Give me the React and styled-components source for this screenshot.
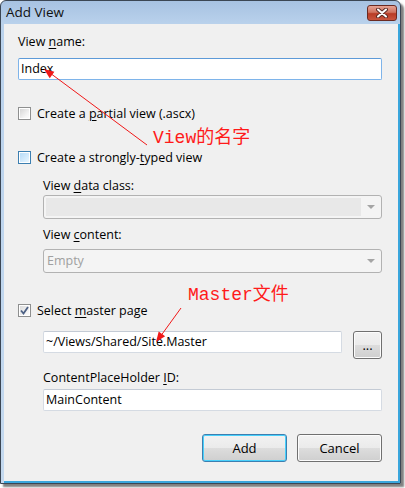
import styled, { createGlobalStyle } from "styled-components";

const GlobalStyle = createGlobalStyle`
  html, body {
    margin: 0;
    padding: 0;
    background: #ffffff;
  }
  body {
    font-family: "Open Sans", "Liberation Sans", Arial, sans-serif;
    font-size: 12.5px;
    color: #000;
  }
`;

const Page = styled.div`
  position: relative;
  width: 405px;
  height: 488px;
  overflow: hidden;
`;

const Window = styled.div`
  width: 401px;
  height: 484px;
  box-sizing: border-box;
  border: 1px solid #3b4654;
  border-radius: 6px 6px 0 0;
  background: linear-gradient(#a7c2e2, #bad2ec 24px, #c4d9ef);
  box-shadow: 3px 3px 2px rgba(0, 0, 0, 0.5);
  display: flex;
  flex-direction: column;
  padding: 0 0 0 3px;
`;

const TitleBar = styled.div`
  height: 23px;
  display: flex;
  justify-content: space-between;
  align-items: flex-start;
  padding: 0 3px 0 2px;
`;

const Title = styled.div`
  font-size: 13.5px;
  line-height: 14px;
  margin-top: 4px;
  color: #111;
`;

const CloseButton = styled.div`
  width: 30px;
  height: 16px;
  margin-top: 4px;
  box-sizing: border-box;
  border: 1px solid #6b2a22;
  border-radius: 3px;
  background: linear-gradient(#e6a395, #d0735f 45%, #b93b25 55%, #c9553e);
  display: flex;
  align-items: center;
  justify-content: center;
`;

const Client = styled.div`
  flex: 1;
  background: #f0f0f0;
  border-right: 2px solid #3aa6dc;
  border-bottom: 2px solid #3aa6dc;
  padding: 10px 16px 0 14px;
  display: flex;
  flex-direction: column;
`;

const Label = styled.div`
  line-height: 15px;
  margin-top: ${({ $top }) => $top || 0}px;
  color: #000;

  u {
    text-decoration: underline;
    text-underline-offset: 2px;
  }
`;

const TextBox = styled.div`
  height: 22px;
  box-sizing: border-box;
  margin-top: ${({ $top }) => $top || 0}px;
  border: 1px solid ${({ $focus }) => ($focus ? "#7eb4ea" : "#d5dbe3")};
  border-top-color: ${({ $focus }) => ($focus ? "#5d9ad8" : "#c4cbd5")};
  border-radius: 2px;
  background: #fff;
  padding: 0 2px;
  line-height: 20px;
  flex: ${({ $grow }) => ($grow ? 1 : "none")};
`;

const CheckRow = styled.div`
  display: flex;
  align-items: center;
  gap: 6px;
  height: 15px;
  margin-top: ${({ $top }) => $top || 0}px;

  u {
    text-underline-offset: 2px;
  }
`;

const boxStyles = {
  plain: { border: "#8e8f8f", bg: "linear-gradient(135deg, #d6d6d6, #f4f4f4 70%, #fbfbfb)" },
  hover: { border: "#3c7fb1", bg: "linear-gradient(135deg, #b8dcf8, #d9eefd 70%, #ebf6fe)" },
  checked: { border: "#8e8f8f", bg: "linear-gradient(135deg, #dcdcdc, #f4f4f4 70%, #fbfbfb)" },
};

const CheckBox = styled.span`
  width: 13px;
  height: 13px;
  box-sizing: border-box;
  border: 1px solid ${({ $kind }) => boxStyles[$kind].border};
  background: #fff;
  padding: 1px;
  display: inline-flex;

  &::before {
    content: "";
    flex: 1;
    background: ${({ $kind }) => boxStyles[$kind].bg};
  }
`;

const CheckWrap = styled.span`
  position: relative;
  display: inline-flex;

  svg {
    position: absolute;
    left: 2px;
    top: 2px;
  }
`;

const Indent = styled.div`
  margin-left: 25px;
  display: flex;
  flex-direction: column;
`;

const Combo = styled.div`
  height: 24px;
  box-sizing: border-box;
  margin-top: ${({ $top }) => $top || 0}px;
  border: 1px solid #b2b2b2;
  border-radius: 3px;
  background: #f4f4f4;
  display: flex;
  align-items: stretch;
  padding: 2px;
`;

const ComboField = styled.div`
  flex: 1;
  background: ${({ $shaded }) => ($shaded ? "#e8e8e8" : "transparent")};
  margin-right: 1px;
  color: #a0a0a0;
  line-height: 18px;
  padding-left: 1px;
`;

const ComboArrow = styled.div`
  width: 17px;
  display: flex;
  align-items: center;
  justify-content: center;

  &::after {
    content: "";
    border-left: 4px solid transparent;
    border-right: 4px solid transparent;
    border-top: 4px solid #a5a5a5;
  }
`;

const MasterRow = styled.div`
  display: flex;
  align-items: flex-start;
  gap: 11px;
  margin-top: 13px;
`;

const Button = styled.div`
  width: ${({ $w }) => $w || 85}px;
  height: 28px;
  box-sizing: border-box;
  border: 1px solid ${({ $default }) => ($default ? "#3c7fb1" : "#707070")};
  border-radius: 3px;
  box-shadow: inset 0 0 0 1px ${({ $default }) => ($default ? "#48d0fb" : "#fcfcfc")};
  background: linear-gradient(#f2f2f2, #ebebeb 50%, #dddddd 50%, #cfcfcf);
  display: flex;
  align-items: center;
  justify-content: center;
  font-size: 13px;
  color: #000;
`;

const ButtonBar = styled.div`
  display: flex;
  justify-content: flex-end;
  gap: 10px;
  margin-top: 23px;
`;

const Note = styled.div`
  position: absolute;
  left: ${({ $x }) => $x}px;
  top: ${({ $y }) => $y}px;
  color: #ff1a1a;
  font-family: "Liberation Mono", "Noto Sans CJK SC", monospace;
  font-size: 18px;
  line-height: 20px;
  white-space: nowrap;
`;

const Arrows = styled.svg`
  position: absolute;
  left: 0;
  top: 0;
  pointer-events: none;
`;

export default function App() {
  return (
    <>
      <GlobalStyle />
      <Page>
        <Window>
          <TitleBar>
            <Title>Add View</Title>
            <CloseButton>
              <svg width="14" height="10" viewBox="0 0 14 10">
                <path d="M3 1.5 L11 8.5 M11 1.5 L3 8.5" stroke="#5a2a24" strokeWidth="4" strokeLinecap="round" />
                <path d="M3 1.5 L11 8.5 M11 1.5 L3 8.5" stroke="#ffffff" strokeWidth="2" strokeLinecap="round" />
              </svg>
            </CloseButton>
          </TitleBar>
          <Client>
            <Label>
              View <u>n</u>ame:
            </Label>
            <TextBox $top={9} $focus>
              Index
            </TextBox>
            <CheckRow $top={26}>
              <CheckBox $kind="plain" />
              <span>
                Create a <u>p</u>artial view (.ascx)
              </span>
            </CheckRow>
            <CheckRow $top={29}>
              <CheckBox $kind="hover" />
              <span>
                Create a strongly-<u>t</u>yped view
              </span>
            </CheckRow>
            <Indent>
              <Label $top={13}>
                View <u>d</u>ata class:
              </Label>
              <Combo $top={2}>
                <ComboField $shaded />
                <ComboArrow />
              </Combo>
              <Label $top={8}>
                View <u>c</u>ontent:
              </Label>
              <Combo $top={7}>
                <ComboField>Empty</ComboField>
                <ComboArrow />
              </Combo>
            </Indent>
            <CheckRow $top={30}>
              <CheckWrap>
                <CheckBox $kind="checked" />
                <svg width="9" height="9" viewBox="0 0 9 9">
                  <path d="M1 4.5 L3.5 7.5 L8 1" stroke="#4d6185" strokeWidth="1.8" fill="none" />
                </svg>
              </CheckWrap>
              <span>
                Select <u>m</u>aster page
              </span>
            </CheckRow>
            <Indent>
              <MasterRow>
                <TextBox $grow>~/Views/Shared/Site.Master</TextBox>
                <Button $w={29}>...</Button>
              </MasterRow>
              <Label $top={11}>
                ContentPlaceHolder <u>I</u>D:
              </Label>
              <TextBox $top={4}>MainContent</TextBox>
            </Indent>
            <ButtonBar>
              <Button $default>Add</Button>
              <Button>Cancel</Button>
            </ButtonBar>
          </Client>
        </Window>

        <Arrows width="405" height="488" viewBox="0 0 405 488">
          <line x1="147" y1="145" x2="50" y2="73" stroke="#f01818" strokeWidth="1" />
          <polygon points="44,69 54.4,71.7 49.7,78.2" fill="#f01818" />
          <line x1="181" y1="308" x2="160" y2="337" stroke="#f01818" strokeWidth="1" />
          <polygon points="156,342 165.1,336.3 158.7,331.5" fill="#f01818" />
        </Arrows>
        <Note $x={153} $y={128}>View的名字</Note>
        <Note $x={188} $y={285}>Master文件</Note>
      </Page>
    </>
  );
}
